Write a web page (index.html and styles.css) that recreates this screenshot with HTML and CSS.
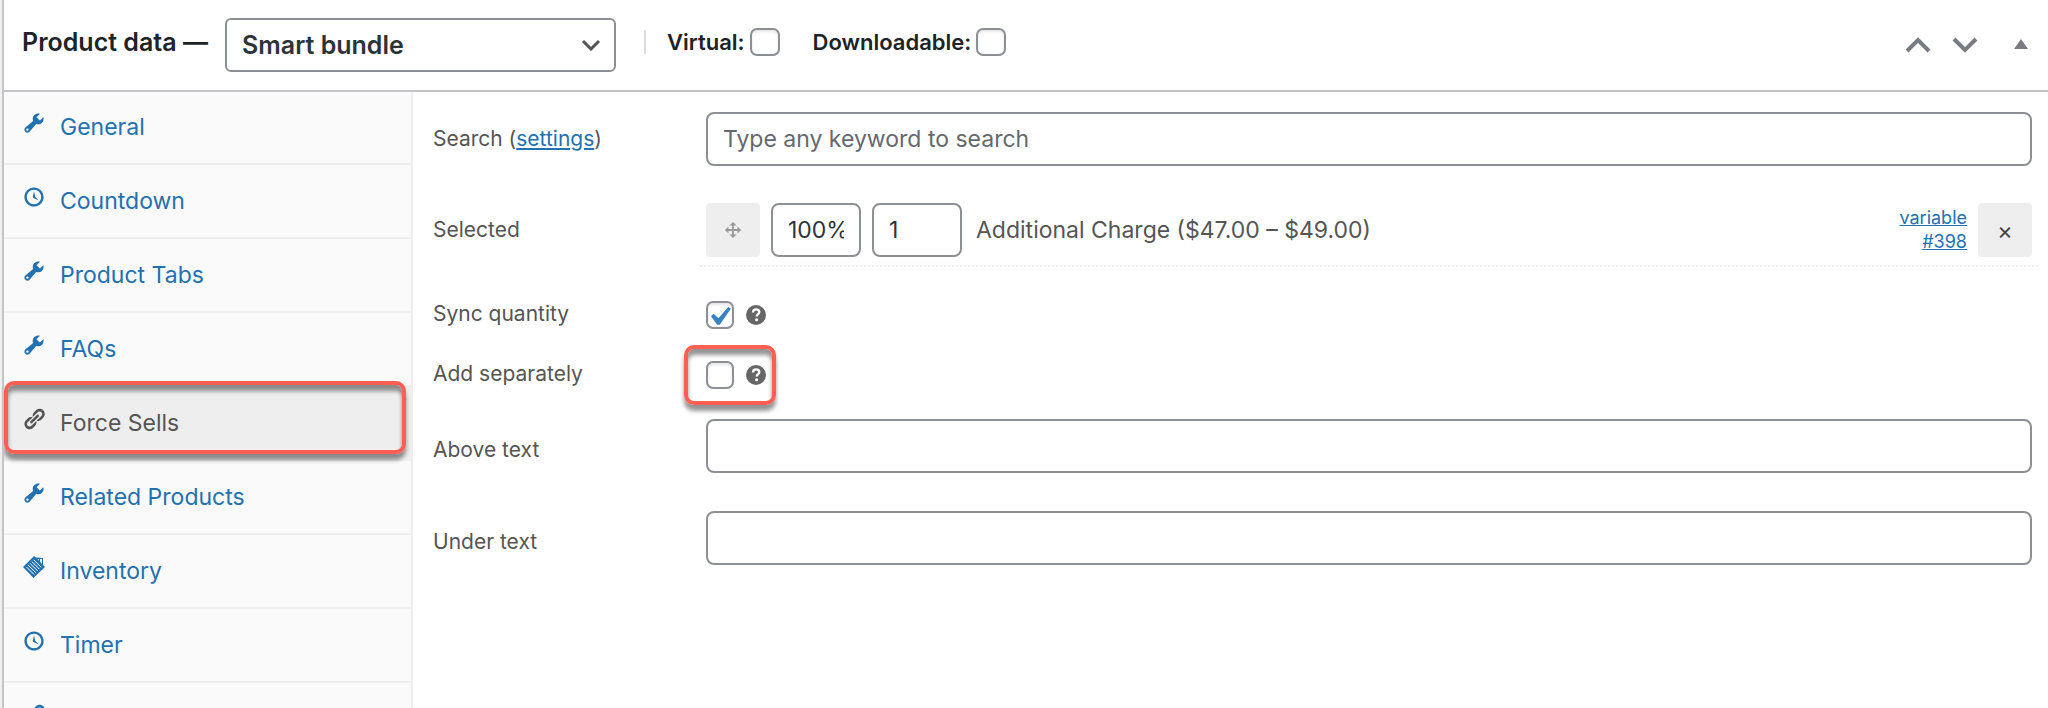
FILE: index.html
```html
<!DOCTYPE html>
<html lang="en">
<head>
<meta charset="utf-8">
<title>Product data</title>
<link rel="stylesheet" href="styles.css">
</head>
<body>
<svg class="sprite" aria-hidden="true">
  <symbol id="wrench" viewBox="0 0 20 20"><path d="M16.68 9.77c-1.34 1.34-3.3 1.67-4.95.99l-5.41 6.52c-.99.99-2.59.99-3.58 0s-.99-2.59 0-3.57l6.52-5.42c-.68-1.65-.35-3.61.99-4.95 1.28-1.28 3.12-1.62 4.72-1.06l-2.89 2.89 2.82 2.82 2.86-2.87c.53 1.58.18 3.39-1.08 4.65zM3.81 16.21c.4.39 1.04.39 1.43 0 .4-.4.4-1.04 0-1.43-.39-.4-1.03-.4-1.43 0-.39.39-.39 1.03 0 1.43z"/></symbol>
  <symbol id="clock" viewBox="0 0 20 20"><path d="M10 2c4.42 0 8 3.58 8 8s-3.58 8-8 8-8-3.58-8-8 3.58-8 8-8zm0 14c3.31 0 6-2.69 6-6s-2.69-6-6-6-6 2.69-6 6 2.69 6 6 6zm-.71-5.29c.07.05.14.1.23.15l-.02.02L14 13l-3.03-3.19L10 5l-.97 4.81h.01c0 .02-.01.05-.02.09S9 9.97 9 10c0 .28.1.52.29.71z"/></symbol>
  <symbol id="link" viewBox="0 0 20 20"><path d="M17.74 2.76c1.68 1.69 1.68 4.41 0 6.1l-1.53 1.52c-1.12 1.12-2.7 1.47-4.14 1.09l2.62-2.61.76-.77.76-.76c.84-.84.84-2.2 0-3.04-.84-.85-2.2-.85-3.04 0l-.77.76-3.38 3.38c-.37-1.44-.02-3.02 1.1-4.14l1.52-1.53c1.69-1.68 4.42-1.68 6.1 0zM8.59 13.43l5.34-5.34c.42-.42.42-1.1 0-1.52-.44-.43-1.13-.39-1.53 0l-5.33 5.34c-.42.42-.42 1.1 0 1.52.44.43 1.13.39 1.52 0zm-.76 2.29l4.14-4.15c.38 1.44.03 3.02-1.09 4.14l-1.52 1.53c-1.69 1.68-4.41 1.68-6.1 0-1.68-1.68-1.68-4.42 0-6.1l1.53-1.52c1.12-1.12 2.7-1.47 4.14-1.1l-4.14 4.15c-.85.84-.85 2.2 0 3.05.84.84 2.2.84 3.04 0z"/></symbol>
  <symbol id="inventory" viewBox="0 0 24 24"><path d="M12 1l2 1.500 7 .5v7l2 2L11.500 23 1 12z"/><path d="M15.500 4h4.500v5z" fill="#fafafa"/><path d="M17.500 3.500v3.500" stroke="#2271b1" stroke-width="1.200"/><path d="M4.500 12l7.500 7.500M6.300 10.200l7.500 7.500M8.100 8.400l7.500 7.500M9.900 6.600l7.500 7.500M11.700 4.800l7.500 7.500" stroke="#fafafa" stroke-width="1" fill="none"/></symbol>
  <symbol id="move" viewBox="0 0 20 20"><path d="M19 10l-4 4v-3h-4v4h3l-4 4-4-4h3v-4H5v3l-4-4 4-4v3h4V5H6l4-4 4 4h-3v4h4V6z"/></symbol>
  <symbol id="help" viewBox="0 0 20 20"><circle cx="10" cy="10" r="10"/><path d="M7 7.500C7 5.300 8.400 4.400 10.200 4.400s3.100 1 3.100 2.700c0 2-2.600 2.100-2.600 4.500" fill="none" stroke="#fff" stroke-width="2.300"/><circle cx="10.600" cy="14.800" r="1.500" fill="#fff"/></symbol>
</svg>

<section class="postbox">
  <header class="postbox-header">
    <label class="title" for="product-type">Product data —</label>
    <span class="select">
      <select id="product-type"><option>Smart bundle</option></select>
      <svg class="select-arrow" viewBox="0 0 20 12" aria-hidden="true"><path d="M2 2l8 8 8-8"/></svg>
    </span>
    <div class="type-options">
      <label for="virtual">Virtual:</label>
      <input class="checkbox" type="checkbox" id="virtual">
      <label class="second" for="downloadable">Downloadable:</label>
      <input class="checkbox" type="checkbox" id="downloadable">
    </div>
    <div class="handle-actions">
      <button type="button" aria-label="Move up"><svg class="chevron" viewBox="0 0 26 16"><path d="M2 14L13 3l11 11"/></svg></button>
      <button type="button" aria-label="Move down"><svg class="chevron" viewBox="0 0 26 16"><path d="M2 2l11 11L24 2"/></svg></button>
      <button class="toggle" type="button" aria-label="Toggle panel"><svg class="triangle" viewBox="0 0 14 10"><path d="M7 0l7 10H0z"/></svg></button>
    </div>
  </header>

  <div class="panel-wrap">
    <nav class="tabs">
      <ul>
        <li><a href="#general"><svg class="icon"><use href="#wrench"/></svg>General</a></li>
        <li><a href="#countdown"><svg class="icon"><use href="#clock"/></svg>Countdown</a></li>
        <li><a href="#product-tabs"><svg class="icon"><use href="#wrench"/></svg>Product Tabs</a></li>
        <li><a href="#faqs"><svg class="icon"><use href="#wrench"/></svg>FAQs</a></li>
        <li class="active"><a href="#force-sells"><svg class="icon"><use href="#link"/></svg>Force Sells</a><span class="callout callout-tab"></span></li>
        <li><a href="#related"><svg class="icon"><use href="#wrench"/></svg>Related Products</a></li>
        <li><a href="#inventory-tab"><svg class="icon"><use href="#inventory"/></svg>Inventory</a></li>
        <li><a href="#timer"><svg class="icon"><use href="#clock"/></svg>Timer</a></li>
        <li><a href="#linked"><svg class="icon"><use href="#link"/></svg></a></li>
      </ul>
    </nav>

    <form class="options">
      <div class="row">
        <div class="row-label"><label for="search">Search</label> (<a href="#settings">settings</a>)</div>
        <input class="field" type="text" id="search" placeholder="Type any keyword to search">
      </div>
      <div class="row selected-row">
        <div class="row-label">Selected</div>
        <div class="selected-item">
          <span class="drag"><svg class="move-icon"><use href="#move"/></svg></span>
          <input class="field small" type="text" value="100%" aria-label="Price">
          <input class="field small" type="text" value="1" aria-label="Quantity">
          <span class="name">Additional Charge ($47.00 – $49.00)</span>
          <a class="product-link" href="#398">variable<br>#398</a>
          <button class="remove" type="button" aria-label="Remove">×</button>
        </div>
      </div>
      <div class="row check-row">
        <label class="row-label" for="sync">Sync quantity</label>
        <div class="check-group">
          <input class="checkbox" type="checkbox" id="sync" checked>
          <svg class="help-icon"><use href="#help"/></svg>
        </div>
      </div>
      <div class="row check-row">
        <label class="row-label" for="separately">Add separately</label>
        <div class="check-group">
          <input class="checkbox" type="checkbox" id="separately">
          <svg class="help-icon"><use href="#help"/></svg>
          <span class="callout callout-check"></span>
        </div>
      </div>
      <div class="row text-row">
        <label class="row-label" for="above">Above text</label>
        <input class="field" type="text" id="above">
      </div>
      <div class="row text-row">
        <label class="row-label" for="under">Under text</label>
        <input class="field" type="text" id="under">
      </div>
    </form>
  </div>
</section>
</body>
</html>
```
FILE: styles.css
```css
* {
  box-sizing: border-box;
}

body {
  margin: 0;
  background: #f0f0f1;
  color: #1d2327;
  font-family: Inter, "Liberation Sans", sans-serif;
  font-size: 22px;
  line-height: 28px;
}

a {
  color: #2271b1;
}

button,
input,
select {
  margin: 0;
  font-family: inherit;
}

.sprite {
  display: none;
}

.postbox {
  display: flex;
  flex-direction: column;
  height: 100vh;
  margin-left: 2px;
  overflow: hidden;
  border-left: 2px solid #c3c4c7;
  background: #fff;
}

/* Header */
.postbox-header {
  display: flex;
  flex: none;
  align-items: center;
  min-height: 92px;
  padding: 0 20px 0 18px;
  border-bottom: 2px solid #c3c4c7;
  font-weight: 600;
}

.title {
  width: 203px;
  padding-bottom: 6px;
  font-size: 25px;
  white-space: nowrap;
}

.select {
  position: relative;
  width: 391px;
}

.select select {
  display: block;
  width: 100%;
  height: 54px;
  padding: 0 48px 0 15px;
  appearance: none;
  border: 2px solid #8c8f94;
  border-radius: 6px;
  background: #fff;
  color: #2c3338;
  font-size: 25px;
  font-weight: 600;
}

.select-arrow {
  position: absolute;
  top: 21px;
  right: 15px;
  width: 20px;
  height: 12px;
  fill: none;
  stroke: #555;
  stroke-width: 3;
  pointer-events: none;
}

.type-options {
  display: flex;
  align-items: center;
  gap: 5px;
  margin: 0 0 6px 28px;
  padding-left: 21px;
  border-left: 2px solid #dcdcde;
  line-height: 24px;
}

.type-options .checkbox {
  width: 30px;
  margin: -2px 0;
}

.type-options .second {
  margin-left: 28px;
}

.handle-actions {
  display: flex;
  align-items: center;
  gap: 21px;
  margin-left: auto;
}

.handle-actions button {
  display: flex;
  padding: 0;
  border: 0;
  background: none;
}

.handle-actions .toggle {
  margin: 0 0 2px 15px;
}

.chevron {
  width: 26px;
  height: 16px;
  fill: none;
  stroke: #787c82;
  stroke-width: 4;
}

.triangle {
  width: 14px;
  height: 10px;
  fill: #787c82;
}

/* Tabs */
.panel-wrap {
  display: flex;
  flex: 1;
  min-height: 0;
}

.tabs {
  flex: none;
  width: 409px;
  border-right: 2px solid #eee;
  background: #fafafa;
}

.tabs ul {
  margin: -1px 0 0;
  padding: 0;
  list-style: none;
}

.tabs li {
  position: relative;
}

.tabs a {
  display: flex;
  align-items: center;
  gap: 14px;
  height: 74px;
  padding-left: 18px;
  border-bottom: 2px solid #eee;
  font-size: 23px;
  text-decoration: none;
}

.tabs .active a {
  background: #eee;
  color: #555;
}

.icon {
  width: 24px;
  height: 24px;
  margin-bottom: 8px;
  fill: currentColor;
}

/* Annotation frames */
.callout {
  position: absolute;
  border: 4px solid #ff5f52;
  border-radius: 10px;
  box-shadow: 0 6px 4px rgba(0, 0, 0, .42), inset 0 6px 4px rgba(0, 0, 0, .42);
  pointer-events: none;
}

.callout-tab {
  inset: -6px 5px 7px 0;
  z-index: 1;
}

.callout-check {
  inset: -16px -10px -16px -22px;
}

/* Options */
.options {
  flex: 1;
  min-width: 0;
  padding: 1px 16px 0 20px;
}

.row {
  display: grid;
  grid-template-columns: 273px 1fr;
  align-items: center;
  padding: 19px 0;
  color: #555;
}

.row-label {
  font-size: 21px;
}

.field {
  width: 100%;
  height: 54px;
  padding: 0 15px;
  border: 2px solid #8c8f94;
  border-radius: 8px;
  background: #fff;
  color: #2c3338;
  font-size: 23px;
}

.field::placeholder {
  color: #646970;
  opacity: 1;
}

.field.small {
  width: 90px;
}

.selected-row {
  padding: 18px 0;
}

.selected-row .row-label {
  padding-bottom: 10px;
}

.selected-item {
  display: flex;
  align-items: center;
  gap: 11px;
  margin: 0 -6px;
  padding: 0 6px 8px;
  border-bottom: 2px dotted #eee;
}

.drag,
.remove {
  display: flex;
  flex: none;
  align-items: center;
  justify-content: center;
  width: 54px;
  height: 54px;
  border: 0;
  border-radius: 4px;
  background: #eee;
}

.move-icon {
  width: 18px;
  height: 18px;
  fill: #999;
}

.name {
  margin-left: 3px;
  font-size: 23px;
}

.product-link {
  margin-left: auto;
  font-size: 18px;
  line-height: 24px;
  text-align: right;
}

.remove {
  padding: 0;
  color: #444;
  font-size: 24px;
}

.check-row {
  min-height: 60px;
  padding: 0;
}

.check-row .row-label {
  padding-bottom: 3px;
}

.check-group {
  display: flex;
  position: relative;
  align-items: center;
  gap: 12px;
  width: 60px;
}

.checkbox {
  flex: none;
  width: 28px;
  height: 28px;
  appearance: none;
  border: 2px solid #8c8f94;
  border-radius: 7px;
  background: #fff;
  box-shadow: inset 0 2px 3px rgba(0, 0, 0, .1);
}

.checkbox:checked {
  background: #fff url("data:image/svg+xml,%3Csvg xmlns='http://www.w3.org/2000/svg' viewBox='3.15 1.7 14.7 14.7'%3E%3Cpath d='M14.83 4.89l1.34.94-5.81 8.38H9.02L5.78 9.67l1.34-1.25 2.57 2.4z' fill='%233582c4'/%3E%3C/svg%3E") center / 28px 28px no-repeat;
}

.help-icon {
  width: 20px;
  height: 20px;
  fill: #666;
}

.text-row {
  padding: 14px 0 24px;
}

.text-row .row-label {
  padding-top: 8px;
}
```
